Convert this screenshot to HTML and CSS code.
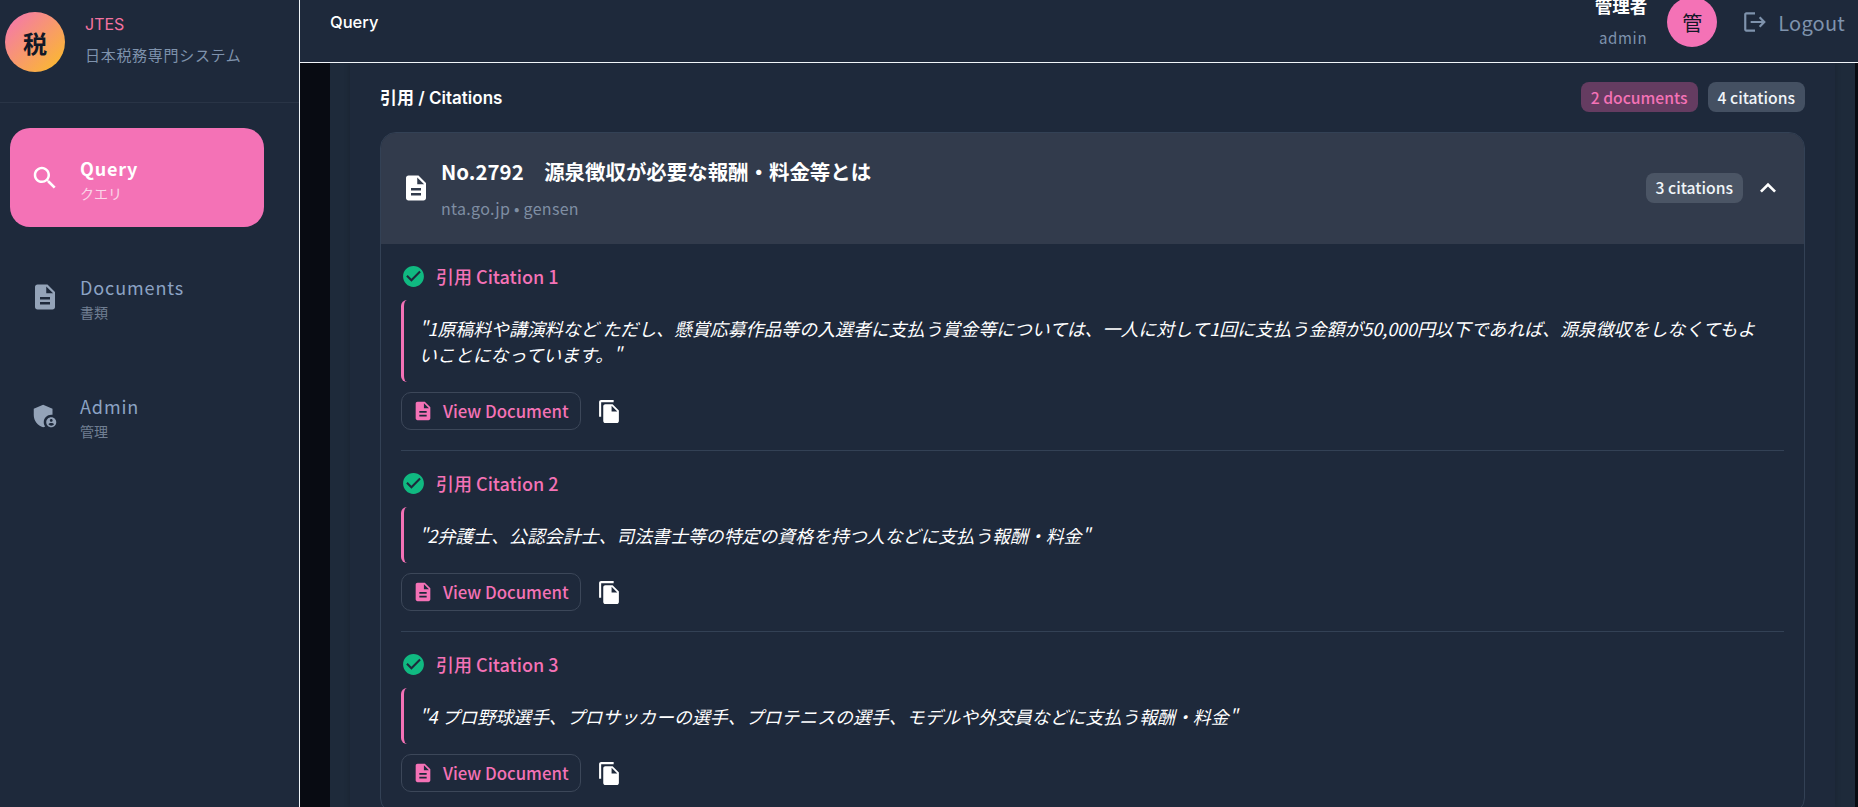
FILE: index.html
```html
<!DOCTYPE html>
<html lang="ja">
<head>
    <meta charset="UTF-8">
    <meta name="viewport" content="width=device-width, initial-scale=1.0">
    <title>JTES</title>
    <link rel="stylesheet" href="styles.css">
</head>
<body>

<svg class="sprite" xmlns="http://www.w3.org/2000/svg">
    <symbol id="i-search" viewBox="0 0 24 24"><path d="M15.5 14h-.79l-.28-.27C15.41 12.59 16 11.11 16 9.5 16 5.91 13.09 3 9.5 3S3 5.91 3 9.5 5.91 16 9.5 16c1.61 0 3.09-.59 4.23-1.57l.27.28v.79l5 4.99L20.49 19l-4.99-5zm-6 0C7.01 14 5 11.99 5 9.5S7.01 5 9.5 5 14 7.01 14 9.5 11.99 14 9.5 14z"/></symbol>
    <symbol id="i-doc" viewBox="0 0 24 24"><path d="M14 2H6c-1.1 0-1.99.9-1.99 2L4 20c0 1.1.89 2 1.99 2H18c1.1 0 2-.9 2-2V8l-6-6zm2 16H8v-2h8v2zm0-4H8v-2h8v2zm-3-5V3.5L18.5 9H13z"/></symbol>
    <symbol id="i-admin" viewBox="0 0 24 24"><path d="M17 11c.34 0 .67.04 1 .09V6.27L10.5 3 3 6.27v4.91c0 4.54 3.2 8.79 7.5 9.82.55-.13 1.08-.32 1.6-.55-.69-.98-1.1-2.17-1.1-3.45 0-3.31 2.69-6 6-6z"/><path d="M17 13c-2.21 0-4 1.79-4 4s1.79 4 4 4 4-1.79 4-4-1.79-4-4-4zm0 1.38c.62 0 1.12.51 1.12 1.12s-.51 1.12-1.12 1.12-1.12-.51-1.12-1.12.5-1.12 1.12-1.12zm0 5.37c-.93 0-1.74-.46-2.24-1.17.05-.72 1.51-1.08 2.24-1.08s2.19.36 2.24 1.08c-.5.71-1.31 1.17-2.24 1.17z"/></symbol>
    <symbol id="i-logout" viewBox="0 0 24 24"><path d="M17 7l-1.41 1.41L18.17 11H8v2h10.17l-2.58 2.58L17 17l5-5zM4 5h8V3H4c-1.1 0-2 .9-2 2v14c0 1.1.9 2 2 2h8v-2H4V5z"/></symbol>
    <symbol id="i-up" viewBox="0 0 24 24"><path d="M12 8l-6 6 1.41 1.41L12 10.83l4.59 4.58L18 14z"/></symbol>
    <symbol id="i-check" viewBox="0 0 24 24"><path d="M12 2C6.48 2 2 6.48 2 12s4.48 10 10 10 10-4.48 10-10S17.52 2 12 2zm-2 15l-5-5 1.41-1.41L10 14.17l7.59-7.59L19 8l-9 9z"/></symbol>
    <symbol id="i-copy" viewBox="0 0 24 24"><path d="M16 1H4c-1.1 0-2 .9-2 2v14h2V3h12V1zm-1 4l6 6v10c0 1.1-.9 2-2 2H7.99C6.89 23 6 22.1 6 21l.01-14c0-1.1.89-2 1.99-2h7zm-1 7h5.5L14 6.5V12z"/></symbol>
</svg>

<div class="app">
    <aside class="sidebar">
        <div class="brand">
            <div class="brand-logo">税</div>
            <div class="brand-text">
                <div class="brand-name">JTES</div>
                <div class="brand-sub">日本税務専門システム</div>
            </div>
        </div>
        <nav class="nav">
            <a class="nav-item active">
                <svg class="nav-icon"><use href="#i-search"/></svg>
                <span class="nav-label"><b>Query</b><small>クエリ</small></span>
            </a>
            <a class="nav-item">
                <svg class="nav-icon"><use href="#i-doc"/></svg>
                <span class="nav-label"><b>Documents</b><small>書類</small></span>
            </a>
            <a class="nav-item">
                <svg class="nav-icon"><use href="#i-admin"/></svg>
                <span class="nav-label"><b>Admin</b><small>管理</small></span>
            </a>
        </nav>
    </aside>

    <div class="main">
        <header class="topbar">
            <div class="page-title">Query</div>
            <div class="user">
                <div class="user-text">
                    <div class="user-name">管理者</div>
                    <div class="user-id">admin</div>
                </div>
                <div class="user-avatar">管</div>
                <a class="logout">
                    <svg class="logout-icon"><use href="#i-logout"/></svg>
                    Logout
                </a>
            </div>
        </header>

        <div class="content">
            <div class="outer">
                <section class="panel">
                    <div class="panel-head">
                        <h2>引用 / Citations</h2>
                        <div class="badges">
                            <span class="badge pink">2 documents</span>
                            <span class="badge grey">4 citations</span>
                        </div>
                    </div>

                    <div class="doc-card">
                        <div class="doc-head">
                            <svg class="doc-icon"><use href="#i-doc"/></svg>
                            <div class="doc-info">
                                <h3>No.2792　源泉徴収が必要な報酬・料金等とは</h3>
                                <div class="doc-meta">nta.go.jp • gensen</div>
                            </div>
                            <span class="badge light">3 citations</span>
                            <svg class="chevron"><use href="#i-up"/></svg>
                        </div>

                        <div class="citation">
                            <div class="citation-title">
                                <svg class="check"><use href="#i-check"/></svg>
                                引用 Citation 1
                            </div>
                            <blockquote>"1原稿料や講演料など ただし、懸賞応募作品等の入選者に支払う賞金等については、一人に対して1回に支払う金額が50,000円以下であれば、源泉徴収をしなくてもよいことになっています。"</blockquote>
                            <div class="actions">
                                <a class="view-btn"><svg><use href="#i-doc"/></svg>View Document</a>
                                <svg class="copy"><use href="#i-copy"/></svg>
                            </div>
                        </div>

                        <div class="citation">
                            <div class="citation-title">
                                <svg class="check"><use href="#i-check"/></svg>
                                引用 Citation 2
                            </div>
                            <blockquote>"2弁護士、公認会計士、司法書士等の特定の資格を持つ人などに支払う報酬・料金"</blockquote>
                            <div class="actions">
                                <a class="view-btn"><svg><use href="#i-doc"/></svg>View Document</a>
                                <svg class="copy"><use href="#i-copy"/></svg>
                            </div>
                        </div>

                        <div class="citation">
                            <div class="citation-title">
                                <svg class="check"><use href="#i-check"/></svg>
                                引用 Citation 3
                            </div>
                            <blockquote>"4 プロ野球選手、プロサッカーの選手、プロテニスの選手、モデルや外交員などに支払う報酬・料金"</blockquote>
                            <div class="actions">
                                <a class="view-btn"><svg><use href="#i-doc"/></svg>View Document</a>
                                <svg class="copy"><use href="#i-copy"/></svg>
                            </div>
                        </div>
                    </div>
                </section>
            </div>
        </div>
    </div>
</div>

</body>
</html>
```

FILE: styles.css
```css
* {
    box-sizing: border-box;
}

body {
    margin: 0;
    height: 100vh;
    overflow: hidden;
    background-color: #1e293b;
    color: #fff;
    font-family: 'Noto Sans CJK JP', 'Noto Sans', sans-serif;
}

.sprite {
    display: none;
}

svg {
    fill: currentColor;
    flex-shrink: 0;
}

.app {
    display: flex;
    height: 100vh;
}

/* sidebar */
.sidebar {
    width: 300px;
    flex-shrink: 0;
    background-color: #1e293b;
    border-right: 1px solid #f1f5f9;
}

.brand {
    display: flex;
    height: 103px;
    padding: 12px 0 0 5px;
    border-bottom: 1px solid #293446;
}

.brand-logo {
    width: 60px;
    height: 60px;
    border-radius: 50%;
    background: linear-gradient(135deg, #f472b6, #fbbf24);
    color: #111827;
    font-size: 24px;
    font-weight: 700;
    display: flex;
    align-items: center;
    justify-content: center;
}

.brand-text {
    margin-left: 20px;
    font-family: Inter, 'Noto Sans CJK JP', sans-serif;
}

.brand-name {
    color: #f472a0;
    font-size: 16px;
    font-weight: 400;
    line-height: 24px;
}

.brand-sub {
    color: #7f93ad;
    font-size: 15px;
    line-height: 24px;
    margin-top: 8px;
    letter-spacing: 0.7px;
}

.nav {
    padding: 25px 35px 0 10px;
    display: flex;
    flex-direction: column;
    gap: 20px;
}

.nav-item {
    display: flex;
    align-items: center;
    height: 99px;
    padding-left: 20px;
    border-radius: 20px;
    color: #94a3b8;
}

.nav-item.active {
    background-color: #f472b6;
    color: #fff;
}

.nav-icon {
    width: 30px;
    height: 30px;
}

.nav-label {
    margin-left: 20px;
    padding-top: 2px;
    display: flex;
    flex-direction: column;
}

.nav-label b {
    color: #8ca3c4;
    font-size: 18px;
    font-weight: 400;
    line-height: 28px;
    letter-spacing: 0.9px;
}

.active .nav-label b {
    color: #fff;
    font-weight: 600;
    letter-spacing: 0.8px;
}

.nav-label small {
    font-size: 14px;
    line-height: 22px;
    opacity: 0.7;
}

/* top bar */
.main {
    flex: 1;
    min-width: 0;
    display: flex;
    flex-direction: column;
}

.topbar {
    height: 63px;
    flex-shrink: 0;
    display: flex;
    align-items: center;
    justify-content: space-between;
    padding: 0 13px 18px 30px;
    border-bottom: 1px solid #f1f5f9;
}

.page-title {
    font-family: Inter, sans-serif;
    font-size: 16.5px;
    font-weight: 500;
}

.user {
    display: flex;
    align-items: center;
}

.user-text {
    text-align: right;
}

.user-name {
    font-size: 17.5px;
    font-weight: 700;
    line-height: 24px;
}

.user-id {
    color: #7f93ad;
    font-size: 15px;
    line-height: 24px;
    margin-top: 8px;
    letter-spacing: 0.7px;
}

.user-avatar {
    width: 50px;
    height: 50px;
    margin-left: 20px;
    border-radius: 50%;
    background-color: #f472b6;
    color: #111827;
    font-size: 20px;
    display: flex;
    align-items: center;
    justify-content: center;
}

.logout {
    display: flex;
    align-items: center;
    margin-left: 25px;
    color: #7f93ad;
    font-size: 20px;
    letter-spacing: 0.2px;
}

.logout-icon {
    width: 26px;
    height: 26px;
    margin-right: 10px;
}

/* content */
.content {
    flex: 1;
    min-height: 0;
    padding: 0 3px 0 30px;
    background: #080b12;
    overflow: hidden;
}

.outer {
    height: 100%;
    padding: 0 20px;
    background-color: #1e2a3a;
}

.panel {
    height: 100%;
    padding: 19px 30px 0;
    background-color: #1e293b;
    box-shadow: 0 0 6px rgba(0, 0, 0, 0.2);
}

.panel-head {
    display: flex;
    align-items: center;
    justify-content: space-between;
    height: 30px;
    margin-bottom: 20px;
}

h2 {
    margin: 0 0 2px;
    font-family: Inter, 'Noto Sans CJK JP', sans-serif;
    font-size: 17px;
    font-weight: 600;
}

.badges {
    display: flex;
    gap: 10px;
}

.badge {
    display: inline-flex;
    align-items: center;
    height: 30px;
    padding: 0 10px;
    border-radius: 8px;
    font-size: 15.7px;
    font-weight: 500;
}

.badge.pink {
    background-color: #653c61;
    color: #f472b6;
}

.badge.grey {
    background-color: #445062;
    color: #f1f5f9;
}

.badge.light {
    background-color: #4b5565;
    color: #f1f5f9;
}

.doc-card {
    border: 1px solid #334155;
    border-radius: 16px;
}

.doc-head {
    display: flex;
    align-items: center;
    height: 111px;
    padding: 0 20px 2px;
    background-color: #323b4c;
    border-radius: 15px 15px 0 0;
}

.doc-icon {
    width: 30px;
    height: 30px;
}

.doc-info {
    flex: 1;
    margin-left: 10px;
    margin-bottom: 1px;
}

h3 {
    margin: 0;
    font-size: 20.45px;
    font-weight: 700;
    line-height: 30px;
}

.doc-meta {
    margin-top: 12px;
    color: #7f8ea3;
    font-size: 16px;
    line-height: 20px;
    letter-spacing: 0.3px;
}

.chevron {
    width: 32px;
    height: 32px;
    margin-left: 9px;
}

.citation {
    margin: 0 20px;
    padding: 20px 0;
    border-bottom: 1px solid #334155;
}

.citation-title {
    display: flex;
    align-items: center;
    height: 24px;
    color: #f472b6;
    font-size: 18px;
    font-weight: 500;
}

.check {
    width: 25px;
    height: 25px;
    margin-right: 10px;
    color: #10b981;
}

blockquote {
    margin: 12px 0 10px;
    padding: 15px 20px 15px 15px;
    border-left: 3px solid #f472b6;
    border-radius: 6px;
    font-size: 17.9px;
    font-style: italic;
    line-height: 26px;
}

.actions {
    display: flex;
    align-items: center;
}

.view-btn {
    display: flex;
    align-items: center;
    height: 38px;
    padding: 0 11px 0 10px;
    border: 1px solid #3c4759;
    border-radius: 10px;
    color: #f472b6;
    font-size: 16.8px;
    font-weight: 500;
}

.view-btn svg {
    width: 22px;
    height: 22px;
    margin-right: 9px;
}

.copy {
    width: 25px;
    height: 25px;
    margin-left: 16px;
}
```
